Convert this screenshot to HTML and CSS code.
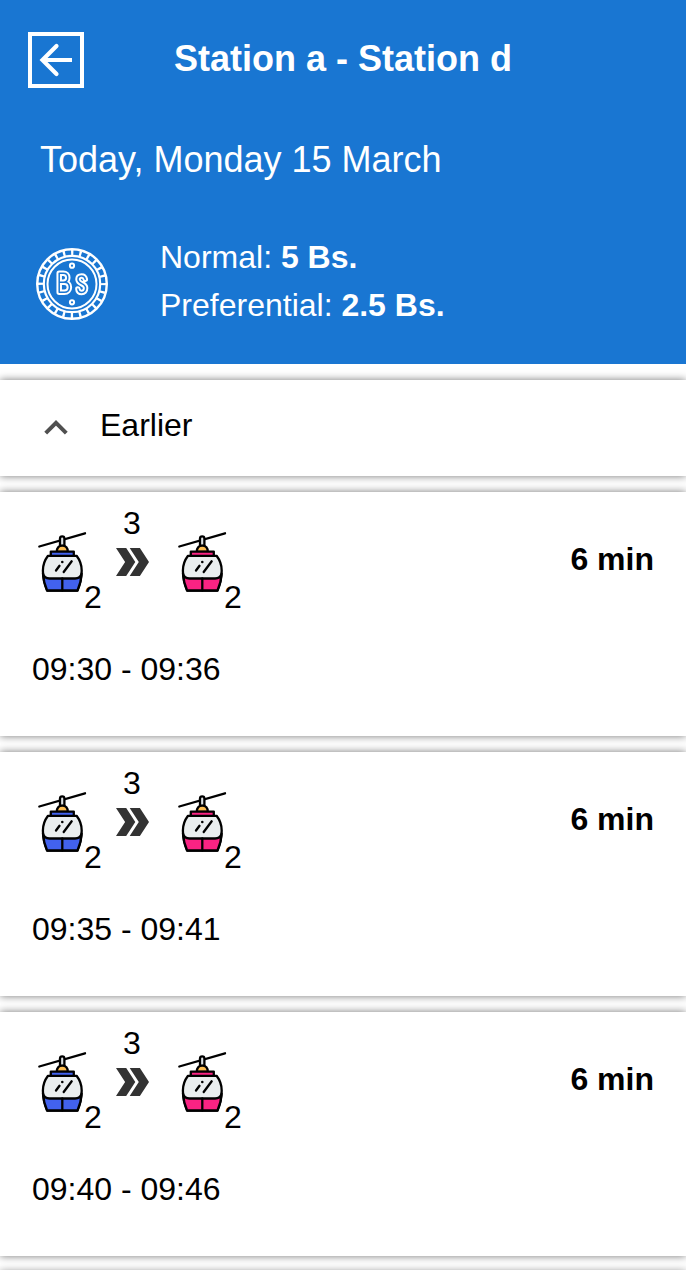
FILE: index.html
```html
<!DOCTYPE html>
<html lang="en">
<head>
<meta charset="utf-8">
<title>Station a - Station d</title>
<link rel="stylesheet" href="styles.css">
</head>
<body>
<svg class="defs" width="0" height="0" aria-hidden="true">
  <symbol id="gondola" viewBox="0 0 52 60" overflow="visible">
    <g stroke="#000" stroke-width="2.300" stroke-linecap="round" stroke-linejoin="round">
      <path d="M7.300 14.500 53 1.300" fill="none"/>
      <path d="M28 14V6.500a2.200 2.200 0 0 1 4.400 0V14z" fill="#dfe3e5"/>
      <path d="M24.800 20c0-3.800 2-6.400 5.500-6.400s5.500 2.600 5.500 6.400z" fill="#fdbd52"/>
      <path d="M16 23.800h28.600c3.400 4.500 5.100 9.500 5.100 14.700 0 7.500-1.700 14.500-4.200 20H15.100c-2.500-5.500-4.200-12.500-4.200-20 0-5.200 1.700-10.200 5.100-14.700z" fill="#eaeeef"/>
      <path d="M11 41.500c.8 3.500 3 5 6.500 5h25.600c3.500 0 5.700-1.500 6.500-5-.4 6.500-1.900 12-4.100 17H15.100c-2.200-5-3.700-10.500-4.100-17z" fill="currentColor"/>
      <path d="M30.300 46.500v12" fill="none"/>
      <path d="M18.800 19.600h23v4.200h-23z" fill="currentColor"/>
      <path d="m24 38.500 3.500-4.700m4.200 6.200 8-10.700" fill="none"/>
    </g>
    <circle cx="30.300" cy="30" r="1.300"/>
  </symbol>
  <symbol id="transfer" viewBox="0 0 34 28">
    <path fill="#333" d="M0 0h10.200l9.100 14-9.100 14H0l9.100-14zM13.700 0h10.200L33 14l-9.100 14H13.700l9.100-14z"/>
  </symbol>
</svg>

<header class="header">
  <div class="title-row">
    <svg class="back" viewBox="0 0 56 56" fill="none" stroke="#fff" stroke-width="4">
      <path d="M2 2h52v52H2z"/>
      <path d="M44 28H16"/>
      <path d="M28.500 14 14.500 28l14 14" stroke-width="4.200" stroke-linecap="round"/>
    </svg>
    <h1 class="title">Station a - Station d</h1>
  </div>
  <p class="date">Today, Monday 15 March</p>
  <div class="fares">
    <svg class="coin" viewBox="0 0 72 72" fill="none" stroke="#fff">
      <defs>
        <g id="bs" stroke-linecap="round" stroke-linejoin="round">
          <path d="M23.200 25.300V44.300H28.300C31.500 44.300 33.400 42.300 33.400 39.300S31.500 34.300 28.300 34.300H23.200M23.200 25.300H27.300C30.100 25.300 31.800 27 31.800 29.800S30.100 34.300 27.300 34.300"/>
          <path d="M49.300 31.300C48.900 29 47.600 28 45.600 28 43.300 28 42 29.300 42 31.300 42 36.700 49.600 34.500 49.600 40.100 49.600 42.900 48 44.500 45.700 44.500 43.300 44.500 42.100 43.200 41.900 40.900"/>
        </g>
      </defs>
      <circle cx="36" cy="36" r="34.800" stroke-width="2.400"/>
      <circle cx="36" cy="36" r="31" stroke-width="6" stroke-dasharray="2.300 5.816" stroke-dashoffset="1.150"/>
      <circle cx="36" cy="36" r="28.200" stroke-width="2.200"/>
      <circle cx="36" cy="36" r="24.500" stroke-width="2"/>
      <circle cx="36" cy="17.700" r="2.100" stroke-width="2"/>
      <circle cx="36" cy="54.300" r="2.100" stroke-width="2"/>
      <use href="#bs" stroke-width="5.500"/>
      <use href="#bs" stroke="#1976d2" stroke-width="1.500"/>
    </svg>
    <div class="prices">
      <p>Normal: <b>5 Bs.</b></p>
      <p>Preferential: <b>2.5 Bs.</b></p>
    </div>
  </div>
</header>

<main class="list">
  <section class="card earlier">
    <svg class="caret" viewBox="0 0 24 15" fill="none" stroke="#505050" stroke-width="4"><path d="M1.700 13.200 12 2.900l10.300 10.300"/></svg>
    <span>Earlier</span>
  </section>

  <article class="card trip">
    <div class="summary">
      <div class="leg"><svg class="cabin blue"><use href="#gondola"/></svg><span>2</span></div>
      <div class="change"><span>3</span><svg class="arrows"><use href="#transfer"/></svg></div>
      <div class="leg"><svg class="cabin pink"><use href="#gondola"/></svg><span>2</span></div>
      <b class="duration">6 min</b>
    </div>
    <p class="time">09:30 - 09:36</p>
  </article>

  <article class="card trip">
    <div class="summary">
      <div class="leg"><svg class="cabin blue"><use href="#gondola"/></svg><span>2</span></div>
      <div class="change"><span>3</span><svg class="arrows"><use href="#transfer"/></svg></div>
      <div class="leg"><svg class="cabin pink"><use href="#gondola"/></svg><span>2</span></div>
      <b class="duration">6 min</b>
    </div>
    <p class="time">09:35 - 09:41</p>
  </article>

  <article class="card trip">
    <div class="summary">
      <div class="leg"><svg class="cabin blue"><use href="#gondola"/></svg><span>2</span></div>
      <div class="change"><span>3</span><svg class="arrows"><use href="#transfer"/></svg></div>
      <div class="leg"><svg class="cabin pink"><use href="#gondola"/></svg><span>2</span></div>
      <b class="duration">6 min</b>
    </div>
    <p class="time">09:40 - 09:46</p>
  </article>

  <article class="card next"></article>
</main>
</body>
</html>
```

FILE: styles.css
```css
* {
  box-sizing: border-box;
}

body {
  margin: 0;
  background: #fff;
  color: #000;
  font-family: "Liberation Sans", Arial, sans-serif;
  font-size: 32px;
  line-height: 36px;
}

p,
h1 {
  margin: 0;
}

svg {
  display: block;
  flex: none;
}

.defs {
  height: 0;
}

.header {
  height: 364px;
  padding: 32px 28px 0;
  background: #1976d2;
  color: #fff;
}

.title-row {
  display: grid;
  grid-template-columns: 56px 1fr 56px;
  height: 56px;
}

.back {
  width: 56px;
  height: 56px;
}

.title {
  padding-top: 6px;
  text-align: center;
  font-size: 36px;
  line-height: 41px;
}

.date {
  margin: 51px 0 0 12px;
  font-size: 36px;
  line-height: 41px;
}

.fares {
  display: flex;
  gap: 52px;
  margin: 53px 0 0 8px;
}

.coin {
  width: 72px;
  height: 72px;
  margin-top: 15px;
}

.prices {
  line-height: 48px;
}

.list {
  display: flex;
  flex-direction: column;
  gap: 16px;
  height: 906px;
  padding-top: 16px;
  overflow: hidden;
}

.card {
  flex: none;
  background: #fff;
  box-shadow: 0 0 8px #777;
}

.earlier {
  display: flex;
  gap: 32px;
  height: 96px;
  padding: 27px 44px 0;
}

.caret {
  width: 24px;
  height: 15px;
  margin-top: 13px;
}

.trip {
  height: 244px;
  padding: 13px 32px 0;
}

.next {
  height: 20px;
}

.summary {
  display: flex;
  height: 146px;
}

.leg {
  display: flex;
  width: 70px;
}

.cabin {
  width: 52px;
  height: 60px;
  margin-top: 27px;
  overflow: visible;
}

.leg span {
  margin-top: 74px;
}

.blue {
  color: #4262ef;
}

.pink {
  color: #fa2383;
}

.change {
  display: flex;
  flex-direction: column;
  align-items: center;
  width: 34px;
  margin: 0 22px 0 14px;
}

.change span {
  margin-right: 2px;
}

.arrows {
  width: 34px;
  height: 28px;
  margin-top: 7px;
}

.duration {
  margin: 36px 0 0 auto;
}
```
